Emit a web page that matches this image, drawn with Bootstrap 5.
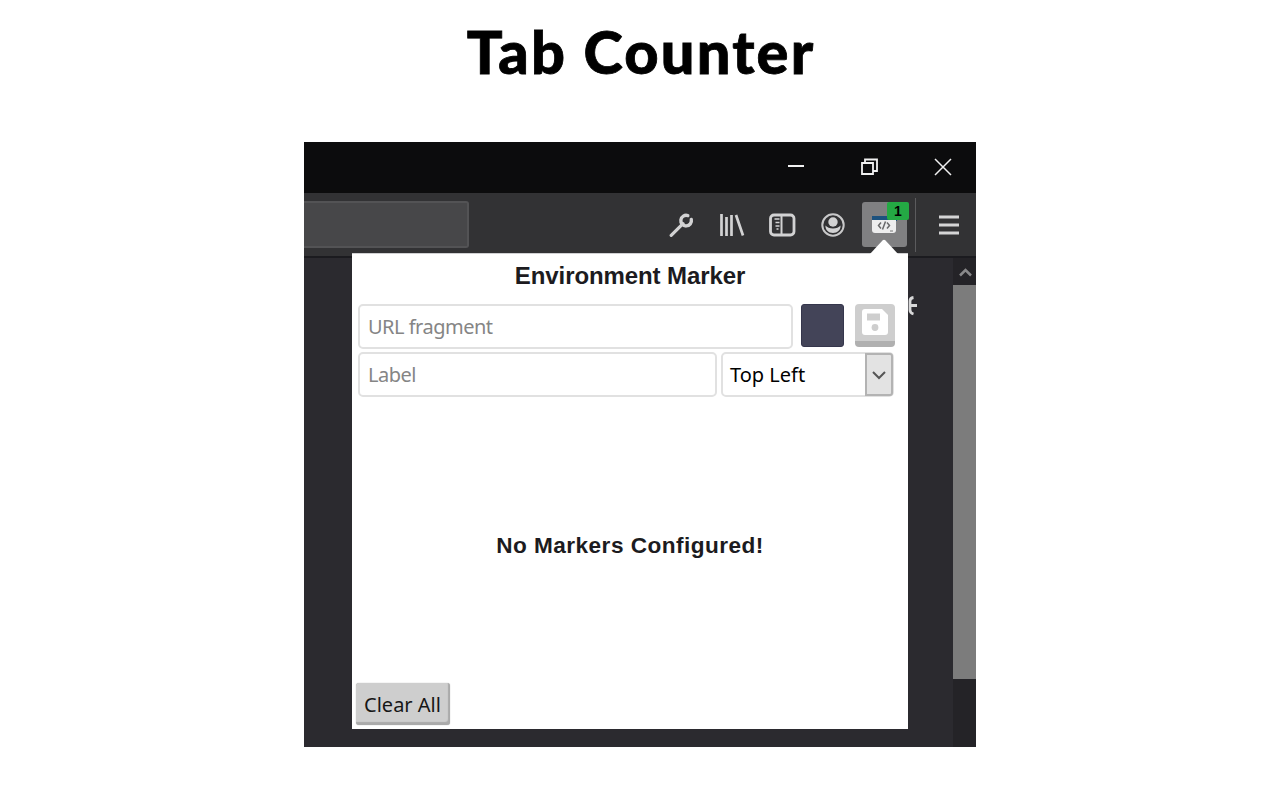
<!DOCTYPE html>
<html lang="en">
<head>
<meta charset="utf-8">
<meta name="viewport" content="width=device-width, initial-scale=1">
<title>Tab Counter</title>
<link href="https://cdn.jsdelivr.net/npm/bootstrap@5.3.0/dist/css/bootstrap.min.css" rel="stylesheet">
<style>
body{width:1280px;height:800px;overflow:hidden;background:#fff;color:#000}
svg{display:block;flex:none}
.headline{font:900 59.500px/72px Lato,sans-serif;height:142px;padding-top:15px;letter-spacing:2.200px;padding-left:2px;white-space:nowrap;-webkit-text-stroke:.8px #000}
.browser{width:672px;height:605px;background:#2b2a2f}
.titlebar{height:51px;background:#0c0c0d;padding:0 24px 2px 0;gap:56px}
.toolbar{height:65px;background:#323234;border-bottom:2px solid #1b1b1f}
.address{width:165px;height:47px;background:#474749;border:2px solid #535355;border-left:0;border-radius:0 3px 3px 0}
.tools{gap:24px;margin-left:200px}
.ext{width:45px;height:45px;background:#808082;border-radius:3px;margin-left:16px}
.count{left:25px;top:0;width:22px;height:18px;background:#24a944;border-radius:2px;font:700 14px/18px "Liberation Sans",sans-serif;color:#000;z-index:3}
.divide{width:1px;height:54px;background:#5b5b5d;margin-left:8px}
.menu{margin-left:23px}
.scroller{width:23px;background:#242327}
.scroller .thumb{height:394px;background:#7c7c7c}
.gearbit{left:603px;top:153px}
.popup{left:48px;top:111px;width:556px;height:476px;background:#fff;font:20px/24px "Noto Sans",sans-serif;border-top:1px solid #d0d0d2;z-index:2}
.pointer{left:516px;top:-15px}
.popup h2{font:700 24px/28px "Liberation Sans",sans-serif;letter-spacing:-.1px;color:#1c1b20;margin:0;padding-top:8px}
.fields{margin:14px 13px 0 6px}
.popup .form-control{height:45px;border:2px solid #e1e1e1;border-radius:5px;padding:0 8px;font-size:20px;letter-spacing:-.5px;color:#000;box-shadow:none;background:#fff}
.popup .form-control::placeholder{color:#858585;opacity:1}
.popup .urlf{width:435px}
.popup .labelf{width:359px}
.second{margin-top:3px}
.swatch{width:43px;height:43px;background:#434458;border:1px solid #35364c;border-radius:3px;margin-left:8px}
.save{width:40px;height:43px;background:#cecece;border-bottom:6px solid #b0b0b0;border-radius:4px;margin-left:11px;padding:5px 0 0 7px}
.picker{width:173px;height:45px;border:2px solid #e1e1e1;border-radius:5px;margin-left:4px;padding-left:7px}
.arrowbox{width:28px;height:43px;background:#e3e3e3;border:2px solid #b3b3b3;border-radius:0 3px 3px 0;margin-right:-1px}
.empty{font:700 22.600px/28px "Liberation Sans",sans-serif;letter-spacing:.47px;color:#1c1b20;padding-top:12px}
.popup .clear{width:94px;height:42px;background:#cecece;border:0;border-radius:3px;box-shadow:inset -2px -3px 1px #aaa,0 0 1px #999;padding:2px 1px 0 0;font:20px/24px "Noto Sans",sans-serif;color:#161616}
</style>
</head>
<body class="m-0">
<h1 class="headline text-center m-0">Tab Counter</h1>
<main class="browser mx-auto position-relative d-flex flex-column overflow-hidden">
  <div class="titlebar d-flex align-items-center justify-content-end">
    <svg width="17" height="18" fill="none" stroke="#f1f1f1" stroke-width="2"><path d="M1 8h17"/></svg>
    <svg width="18" height="18" fill="none" stroke="#f1f1f1" stroke-width="1.8"><path d="M2 5h11v11H2zM5 4.500V1.500h12v11.500h-3.500"/></svg>
    <svg width="18" height="18" fill="none" stroke="#f1f1f1" stroke-width="1.5"><path d="M1 1l16 16M17 1L1 17"/></svg>
  </div>
  <div class="toolbar d-flex align-items-center">
    <div class="address"></div>
    <div class="tools d-flex align-items-center">
      <svg width="26" height="26" viewBox="0 0 26 26"><path d="M2.200 23.400L14 11.600" stroke="#d2d2d3" stroke-width="3.200" stroke-linecap="round"/><path d="M18.800 3.600A5.300 5.300 0 1 0 22.300 7.500" fill="none" stroke="#d2d2d3" stroke-width="3.400" stroke-linecap="round"/></svg>
      <svg width="26" height="26" viewBox="0 0 26 26" fill="none" stroke="#d2d2d3" stroke-width="2.700"><path d="M2.500 2v22M7.500 5v19M12.500 3v21M17 3l7 20.500"/></svg>
      <svg width="27" height="26" viewBox="0 0 27 26" fill="none" stroke="#d2d2d3"><rect x="1.500" y="3" width="23.500" height="20" rx="3.500" stroke-width="2.800"/><path d="M12.500 3v20" stroke-width="2"/><path d="M5.500 7h5M6.500 10.500h4M6.500 14h4M7.500 17h2" stroke-width="1.500"/></svg>
      <svg width="26" height="26" viewBox="0 0 26 26"><circle cx="13" cy="13" r="10.700" fill="none" stroke="#c8c8c9" stroke-width="2"/><circle cx="13" cy="10" r="4.700" fill="#d2d2d3"/><path d="M5.500 13.500q2.500 3 7.500 3t7.500-3c.5 4-3 7.500-7.500 7.500s-8-3.500-7.500-7.500z" fill="#d2d2d3"/></svg>
    </div>
    <div class="ext position-relative">
      <svg width="45" height="45"><path d="M10 14h25v5H10z" fill="#1d527e"/><path d="M10 18h24v10q0 3-3 3H13q-3 0-3-3z" fill="#ededee"/><path d="M19 20.500l-2.500 3 2.500 3M25 20.500l2.500 3-2.500 3M23.500 19.500l-3 8" fill="none" stroke="#69696b" stroke-width="1.500"/><path d="M28 29h3" stroke="#777" stroke-width="1"/></svg>
      <div class="count position-absolute text-center">1</div>
    </div>
    <div class="divide"></div>
    <svg class="menu" width="20" height="22" stroke="#d4d4d5" stroke-width="3"><path d="M0 3h20M0 11h20M0 19h20"/></svg>
  </div>
  <div class="flex-grow-1 d-flex justify-content-end">
    <div class="scroller">
      <svg width="23" height="27" fill="none" stroke="#88888a" stroke-width="2.500"><path d="M7 17.500l5.500-5.500 5.500 5.500"/></svg>
      <div class="thumb"></div>
    </div>
  </div>
  <svg class="gearbit position-absolute" width="11" height="22" fill="none" stroke="#d8d8d9" stroke-width="2.800"><path d="M6.500 2.500Q3 3 3 6v9q0 3 3.500 4M3 10.500h7"/></svg>
  <section class="popup position-absolute d-flex flex-column">
    <svg class="pointer position-absolute" width="32" height="16"><path d="M1 16L14.500 1.500q1.500-1.500 3 0L31 16z" fill="#fff"/></svg>
    <h2 class="text-center">Environment Marker</h2>
    <div class="fields">
      <div class="d-flex align-items-start">
        <input class="form-control urlf" placeholder="URL fragment" aria-label="URL fragment">
        <div class="swatch"></div>
        <div class="save"><svg width="26" height="28"><path d="M3 0h17l6 6v17q0 3-3 3H3q-3 0-3-3V3q0-3 3-3z" fill="#fff"/><path d="M5 4.500h13v7H5z" fill="#cecece"/><circle cx="13" cy="18.500" r="3.400" fill="#cecece"/></svg></div>
      </div>
      <div class="second d-flex">
        <input class="form-control labelf" placeholder="Label" aria-label="Label">
        <div class="picker d-flex align-items-center justify-content-between"><span>Top Left</span>
          <div class="arrowbox d-flex align-items-center justify-content-center"><svg width="14" height="10" fill="none" stroke="#555" stroke-width="2"><path d="M1 2l6 6 6-6"/></svg></div>
        </div>
      </div>
    </div>
    <div class="flex-grow-1 d-flex align-items-center justify-content-center"><div class="empty">No Markers Configured!</div></div>
    <button type="button" class="btn clear ms-1 mb-1 align-self-start">Clear All</button>
  </section>
</main>
<script src="https://cdn.jsdelivr.net/npm/bootstrap@5.3.0/dist/js/bootstrap.bundle.min.js"></script>
</body>
</html>
